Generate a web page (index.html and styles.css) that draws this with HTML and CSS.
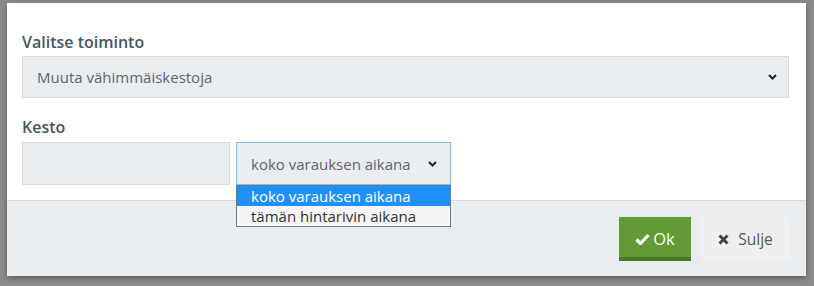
FILE: index.html
```html
<!DOCTYPE html>
<html lang="fi">
<head>
  <meta charset="UTF-8" />
  <title>Valitse toiminto</title>
  <link rel="stylesheet" href="styles.css">
</head>
<body>
  <div class="backdrop">
    <div class="modal">
      <div class="modal-body">
        <div class="label">Valitse toiminto</div>
        <div class="select wide">
          <span>Muuta vähimmäiskestoja</span>
          <svg class="chev" width="9" height="6" viewBox="0 0 9 6"><path d="M1 1l3.5 3.5L8 1" fill="none" stroke="#222" stroke-width="2"/></svg>
        </div>

        <div class="label second">Kesto</div>
        <div class="row">
          <div class="input"></div>
          <div class="select focused">
            <span>koko varauksen aikana</span>
            <svg class="chev" width="9" height="6" viewBox="0 0 9 6"><path d="M1 1l3.5 3.5L8 1" fill="none" stroke="#222" stroke-width="2"/></svg>
            <ul class="options">
              <li class="active">koko varauksen aikana</li>
              <li>tämän hintarivin aikana</li>
            </ul>
          </div>
        </div>
      </div>
      <div class="modal-footer">
        <button class="btn btn-ok">
          <svg width="15" height="12" viewBox="0 0 15 12"><path d="M1.5 6.5l4 4L13.5 2" fill="none" stroke="#fff" stroke-width="3.2" stroke-linejoin="round"/></svg>Ok
        </button>
        <button class="btn btn-close">
          <svg width="11" height="11" viewBox="0 0 11 11"><path d="M1.5 1.5l8 8M9.5 1.5l-8 8" stroke="#3b4750" stroke-width="3"/></svg>Sulje
        </button>
      </div>
    </div>
  </div>
</body>
</html>
```

FILE: styles.css
```css
body {
  margin: 0;
  font-family: 'Open Sans', 'Noto Sans', sans-serif;
  background: #8b8b8b;
  height: 286px;
  overflow: hidden;
}

.backdrop {
  padding: 3px 0 0 7px;
}

.modal {
  width: 799px;
  height: 273px;
  background: #fff;
  display: flex;
  flex-direction: column;
  box-shadow: 0 2px 6px rgba(0, 0, 0, 0.35);
}

.modal-body {
  padding: 29px 17px 0 15px;
  height: 168px;
}

.label {
  font-size: 16px;
  line-height: 20px;
  font-weight: 600;
  color: #475660;
  margin-bottom: 4px;
}

.label.second {
  margin-top: 19px;
  margin-bottom: 5px;
}

.select {
  position: relative;
  box-sizing: border-box;
  height: 42px;
  background: #e9edf0;
  border: 1px solid #d5dce0;
  display: flex;
  align-items: center;
  justify-content: space-between;
  padding: 0 11px 0 14px;
  font-size: 15px;
  color: #5c666d;
}

.select.focused {
  width: 215px;
  height: 43px;
  border-color: #7dbdf0;
  padding-right: 13px;
}

.row {
  display: flex;
  gap: 6px;
}

.input {
  box-sizing: border-box;
  width: 208px;
  height: 43px;
  background: #e9edf0;
  border: 1px solid #d5dce0;
}

.options {
  position: absolute;
  top: 42px;
  left: -1px;
  width: 215px;
  box-sizing: border-box;
  margin: 0;
  padding: 0;
  list-style: none;
  border: 1px solid #767676;
  background: #f4f5f6;
  z-index: 2;
}

.options li {
  height: 20px;
  line-height: 20px;
  padding-left: 14px;
  font-size: 15px;
  color: #333;
}

.options li.active {
  background: #1e90ff;
  color: #fff;
}

.modal-footer {
  flex: 1;
  background: #e9edf0;
  border-top: 1px solid #d3d9de;
  display: flex;
  justify-content: flex-end;
  align-items: flex-start;
  gap: 10px;
  padding: 16px 16px 0 0;
}

.btn {
  height: 44px;
  border: none;
  font-family: inherit;
  font-size: 15.5px;
  display: flex;
  align-items: center;
  justify-content: center;
  gap: 3px;
  cursor: pointer;
}

.btn-ok {
  width: 72px;
  background: #629b35;
  border-bottom: 4px solid #4b7a26;
  color: #fff;
  padding-top: 4px;
  font-size: 16.5px;
}

.btn-close {
  width: 89px;
  background: #efefef;
  color: #4e5962;
  gap: 9px;
}
```
